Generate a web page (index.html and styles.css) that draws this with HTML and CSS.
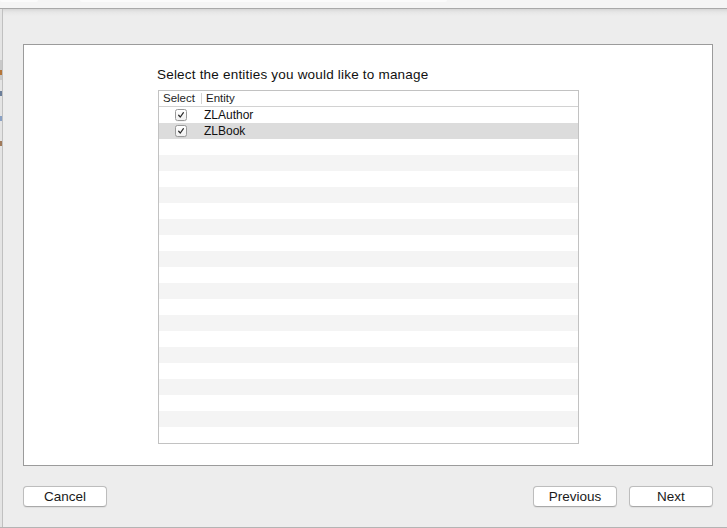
FILE: index.html
```html
<!DOCTYPE html>
<html>
<head>
<meta charset="utf-8">
<link rel="stylesheet" href="styles.css">
</head>
<body>
<div class="topbar">
  <div class="pill pill-a"></div>
  <div class="pill pill-b"></div>
</div>
<div class="main">
  <div class="edge">
    <div class="edge-block"></div>
    <div class="edge-mark m1"></div>
    <div class="edge-mark m2"></div>
    <div class="edge-mark m3"></div>
    <div class="edge-mark m4"></div>
  </div>
  <div class="sheet">
    <div class="panel">
      <div class="heading">Select the entities you would like to manage</div>
      <div class="table">
        <div class="thead">
          <div class="th th-select">Select</div>
          <div class="th-sep"></div>
          <div class="th th-entity">Entity</div>
        </div>
        <div class="tbody">
          <div class="row">
            <div class="cell-check"><span class="checkbox"><svg viewBox="0 0 12 12" width="12" height="12"><path d="M3.2 6.3 L5.2 8.4 L8.9 3.2" fill="none" stroke="#2a2a2a" stroke-width="1.5" stroke-linecap="round" stroke-linejoin="round"/></svg></span></div>
            <div class="cell-name">ZLAuthor</div>
          </div>
          <div class="row selected">
            <div class="cell-check"><span class="checkbox"><svg viewBox="0 0 12 12" width="12" height="12"><path d="M3.2 6.3 L5.2 8.4 L8.9 3.2" fill="none" stroke="#2a2a2a" stroke-width="1.5" stroke-linecap="round" stroke-linejoin="round"/></svg></span></div>
            <div class="cell-name">ZLBook</div>
          </div>
          <div class="row"></div>
          <div class="row stripe"></div>
          <div class="row"></div>
          <div class="row stripe"></div>
          <div class="row"></div>
          <div class="row stripe"></div>
          <div class="row"></div>
          <div class="row stripe"></div>
          <div class="row"></div>
          <div class="row stripe"></div>
          <div class="row"></div>
          <div class="row stripe"></div>
          <div class="row"></div>
          <div class="row stripe"></div>
          <div class="row"></div>
          <div class="row stripe"></div>
          <div class="row"></div>
          <div class="row stripe"></div>
          <div class="row"></div>
        </div>
      </div>
    </div>
    <div class="footer">
      <button class="btn">Cancel</button>
      <div class="nav">
        <button class="btn">Previous</button>
        <button class="btn">Next</button>
      </div>
    </div>
  </div>
</div>
<div class="bottomline"></div>
</body>
</html>
```

FILE: styles.css
```css
* { box-sizing: border-box; }
html, body { margin: 0; padding: 0; }
body {
  width: 727px;
  height: 528px;
  overflow: hidden;
  background: #ededed;
  font-family: "Liberation Sans", Arial, sans-serif;
  color: #1a1a1a;
}
.topbar {
  height: 9px;
  background: #f5f5f5;
  border-bottom: 1px solid #a9a9a9;
  display: flex;
  gap: 42px;
}
.pill {
  height: 2px;
  background: #fbfbfb;
  border-radius: 0 0 3px 3px;
}
.pill-a { width: 38px; }
.pill-b { width: 367px; }
.main {
  height: 518px;
  display: flex;
  background: linear-gradient(#d6d6d6, #e6e6e6 3px, #ededed 7px);
}
.edge {
  width: 3px;
  border-right: 1px solid #c0c0c0;
  background: #e4e4e4;
  display: flex;
  flex-direction: column;
}
.edge-block { height: 20px; margin-top: 51px; background: #c9c9c9; }
.edge-mark { width: 2px; height: 5px; }
.m1 { margin-top: -10px; background: #b5763a; }
.m2 { margin-top: 16px; background: #6c7f9a; }
.m3 { margin-top: 20px; background: #8aa1c4; }
.m4 { margin-top: 20px; background: #a07a5a; }
.sheet {
  flex: 1;
  padding: 35px 14px 0 20px;
  display: flex;
  flex-direction: column;
}
.panel {
  height: 422px;
  background: #ffffff;
  border: 1px solid #9b9b9b;
  padding: 22px 0 0 133px;
}
.heading {
  font-size: 13.5px;
  letter-spacing: 0.2px;
  line-height: 16px;
  margin-bottom: 7px;
  color: #111;
}
.table {
  width: 421px;
  height: 354px;
  margin-left: 1px;
  border: 1px solid #c2c2c2;
  background: #fff;
}
.thead {
  height: 16px;
  border-bottom: 1px solid #d2d2d2;
  display: flex;
  align-items: center;
  font-size: 11.5px;
  line-height: 15px;
  color: #1e1e1e;
}
.th-select { width: 42px; padding-left: 4px; }
.th-sep { width: 1px; height: 11px; background: #d4d4d4; }
.th-entity { padding-left: 4px; }
.row {
  height: 16px;
  display: flex;
  align-items: center;
  font-size: 12px;
  line-height: 16px;
}
.row.selected { background: #dcdcdc; }
.row.stripe { background: #f4f4f4; }
.cell-check {
  width: 43px;
  display: flex;
  justify-content: center;
  padding-left: 1px;
}
.checkbox {
  width: 12px;
  height: 12px;
  border: 1px solid #9a9a9a;
  border-radius: 2.5px;
  background: linear-gradient(#ffffff, #f0f0f0);
  display: flex;
  align-items: center;
  justify-content: center;
  box-shadow: 0 0.5px 0 rgba(0,0,0,0.08);
}
.checkbox svg { display: block; }
.cell-name { padding-left: 2px; color: #111; }
.footer {
  margin-top: 20px;
  display: flex;
  justify-content: space-between;
}
.nav { display: flex; gap: 12px; }
.btn {
  width: 84px;
  height: 21px;
  padding: 0;
  font-family: "Liberation Sans", Arial, sans-serif;
  font-size: 13.5px;
  line-height: 19px;
  color: #1a1a1a;
  background: #ffffff;
  border: 1px solid #bdbdbd;
  border-bottom-color: #a9a9a9;
  border-radius: 4px;
  box-shadow: 0 0.5px 1px rgba(0,0,0,0.06);
}
.bottomline {
  height: 1px;
  background: #b4b4b4;
}
```
